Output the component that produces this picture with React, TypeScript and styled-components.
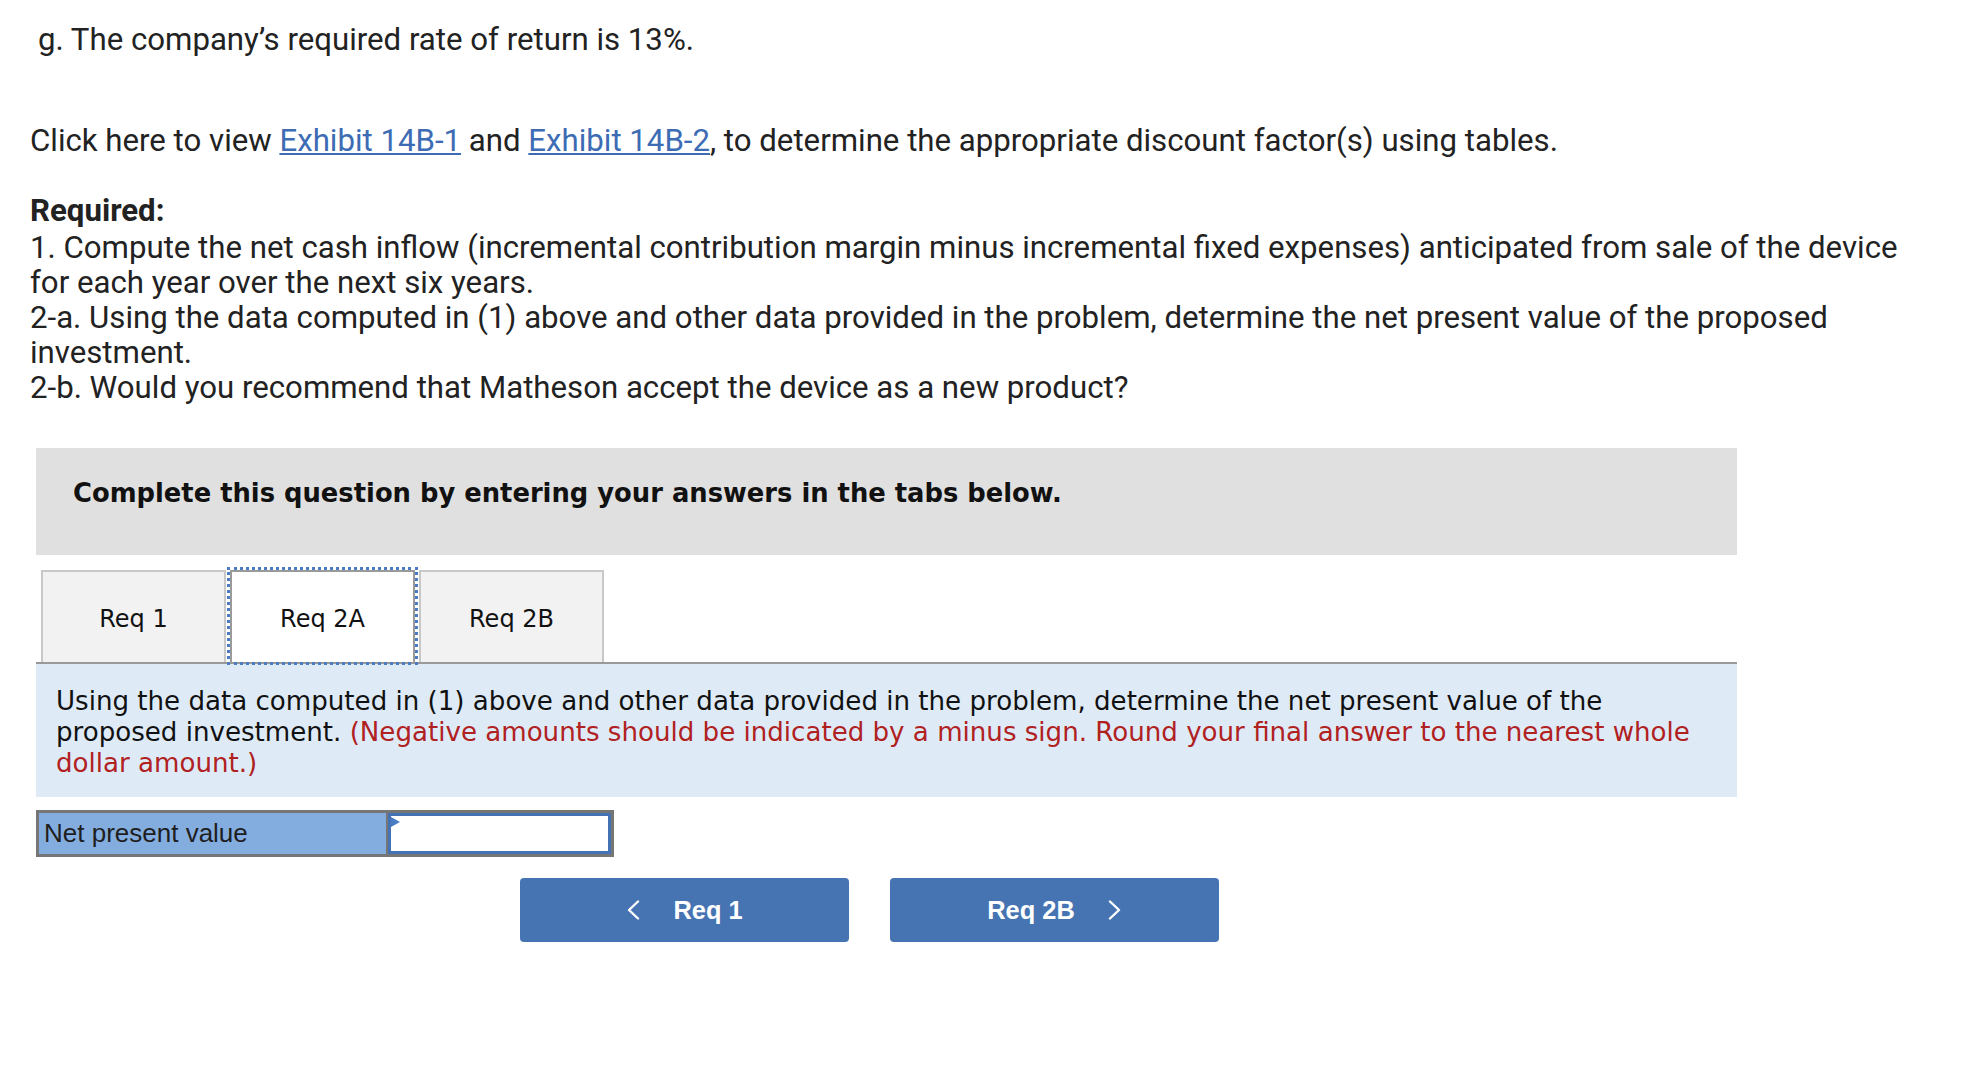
import React from "react";
import styled, { createGlobalStyle } from "styled-components";

const GlobalStyle = createGlobalStyle`
  html, body { margin: 0; padding: 0; background: #ffffff; }
  body { font-family: "Roboto", "Liberation Sans", Arial, sans-serif; color: #222222; }
  * { box-sizing: border-box; }
`;

const Page = styled.main`
  padding: 22px 40px 0 30px;
  font-size: 31.2px;
  line-height: 35px;
`;

const Para = styled.p<{ $indent?: number; $top?: number }>`
  margin: ${(p) => p.$top ?? 0}px 0 0 0;
  padding-left: ${(p) => p.$indent ?? 0}px;
`;

const ExhibitLink = styled.a`
  color: #3d6cb4;
  text-decoration: underline;
  text-decoration-thickness: 2px;
  text-underline-offset: 2px;
  cursor: pointer;
`;

const Required = styled.section`
  margin-top: 35px;
  display: flex;
  flex-direction: column;
`;

const RequiredTitle = styled.strong`
  font-weight: 700;
  margin-bottom: 2px;
`;

const Panel = styled.section`
  margin: 43px 0 0 6px;
  width: 1701px;
`;

const Instruction = styled.div`
  height: 107px;
  background: #e0e0e0;
  padding: 30px 37px 0;
  font-family: "DejaVu Sans", Verdana, sans-serif;
  font-weight: 700;
  font-size: 25.8px;
  line-height: 30px;
  color: #111111;
`;

const TabBar = styled.div`
  margin-top: 15px;
  display: flex;
  padding-left: 5px;
  border-bottom: 2px solid #999999;
`;

const Tab = styled.button<{ $active?: boolean }>`
  width: 185px;
  height: 92px;
  margin-right: 4px;
  display: flex;
  align-items: center;
  justify-content: center;
  padding: 4px 0 0;
  font-family: "DejaVu Sans", Verdana, sans-serif;
  font-size: 24px;
  color: #111111;
  background: ${(p) => (p.$active ? "#ffffff" : "#f2f2f2")};
  border: 2px solid ${(p) => (p.$active ? "#9a9a9a" : "#c8c8c8")};
  border-bottom: none;
  outline: ${(p) => (p.$active ? "3px dotted #4a7cc4" : "none")};
  outline-offset: 0px;
  cursor: pointer;
`;

const Prompt = styled.div`
  background: #deebf7;
  padding: 22px 20px 18px;
  font-family: "DejaVu Sans", Verdana, sans-serif;
  font-size: 26.1px;
  line-height: 31px;
  color: #111111;
`;

const Note = styled.span`
  color: #b0211f;
`;

const AnswerRow = styled.div`
  margin-top: 13px;
  width: 578px;
  height: 47px;
  display: flex;
  border: 3px solid #767676;
`;

const AnswerLabel = styled.div`
  width: 349px;
  background: #84addf;
  border-right: 2px solid #767676;
  display: flex;
  align-items: center;
  padding-left: 5px;
  font-family: "Liberation Sans", Arial, sans-serif;
  font-size: 26px;
  color: #1e1e1e;
`;

const AnswerCell = styled.div`
  position: relative;
  flex: 1;
  border: 3px solid #4472b4;
  background: #ffffff;
`;

const CellMarker = styled.span`
  position: absolute;
  left: 0;
  top: 1px;
  width: 0;
  height: 0;
  border-top: 5px solid transparent;
  border-bottom: 5px solid transparent;
  border-left: 9px solid #4a7cc4;
`;

const AnswerInput = styled.input`
  width: 100%;
  height: 100%;
  border: none;
  outline: none;
  padding: 0 8px;
  font-family: "Liberation Sans", Arial, sans-serif;
  font-size: 24px;
  text-align: right;
  background: transparent;
`;

const Nav = styled.nav`
  margin-top: 21px;
  padding-left: 484px;
  display: flex;
  gap: 41px;
`;

const NavButton = styled.button`
  width: 329px;
  height: 64px;
  border: none;
  border-radius: 4px;
  background: #4674b2;
  color: #ffffff;
  display: flex;
  align-items: center;
  justify-content: center;
  gap: 33px;
  font-family: "Liberation Sans", Arial, sans-serif;
  font-weight: 700;
  font-size: 25.4px;
  cursor: pointer;
  padding: 0;
`;

const Chevron = ({ dir }: { dir: "left" | "right" }) => (
  <svg width="14" height="20" viewBox="0 0 14 20" aria-hidden="true">
    <polyline
      points={dir === "left" ? "12,1.5 3,10 12,18.5" : "2,1.5 11,10 2,18.5"}
      fill="none"
      stroke="#ffffff"
      strokeWidth="2.4"
      strokeLinecap="round"
      strokeLinejoin="round"
    />
  </svg>
);

export default function App() {
  return (
    <>
      <GlobalStyle />
      <Page>
        <Para $indent={8}>g. The company’s required rate of return is 13%.</Para>
        <Para $top={66}>
          Click here to view <ExhibitLink>Exhibit 14B-1</ExhibitLink> and{" "}
          <ExhibitLink>Exhibit 14B-2</ExhibitLink>, to determine the appropriate discount factor(s) using tables.
        </Para>
        <Required>
          <RequiredTitle>Required:</RequiredTitle>
          <span>
            1. Compute the net cash inflow (incremental contribution margin minus incremental fixed expenses) anticipated
            from sale of the device for each year over the next six years.
          </span>
          <span>
            2-a. Using the data computed in (1) above and other data provided in the problem, determine the net present
            value of the proposed investment.
          </span>
          <span>2-b. Would you recommend that Matheson accept the device as a new product?</span>
        </Required>

        <Panel>
          <Instruction>Complete this question by entering your answers in the tabs below.</Instruction>
          <TabBar>
            <Tab>Req 1</Tab>
            <Tab $active>Req 2A</Tab>
            <Tab>Req 2B</Tab>
          </TabBar>
          <Prompt>
            Using the data computed in (1) above and other data provided in the problem, determine the net present value
            of the proposed investment.{" "}
            <Note>
              (Negative amounts should be indicated by a minus sign. Round your final answer to the nearest whole dollar
              amount.)
            </Note>
          </Prompt>
          <AnswerRow>
            <AnswerLabel>Net present value</AnswerLabel>
            <AnswerCell>
              <CellMarker />
              <AnswerInput aria-label="Net present value" />
            </AnswerCell>
          </AnswerRow>
          <Nav>
            <NavButton>
              <Chevron dir="left" />
              <span>Req 1</span>
            </NavButton>
            <NavButton>
              <span>Req 2B</span>
              <Chevron dir="right" />
            </NavButton>
          </Nav>
        </Panel>
      </Page>
    </>
  );
}
